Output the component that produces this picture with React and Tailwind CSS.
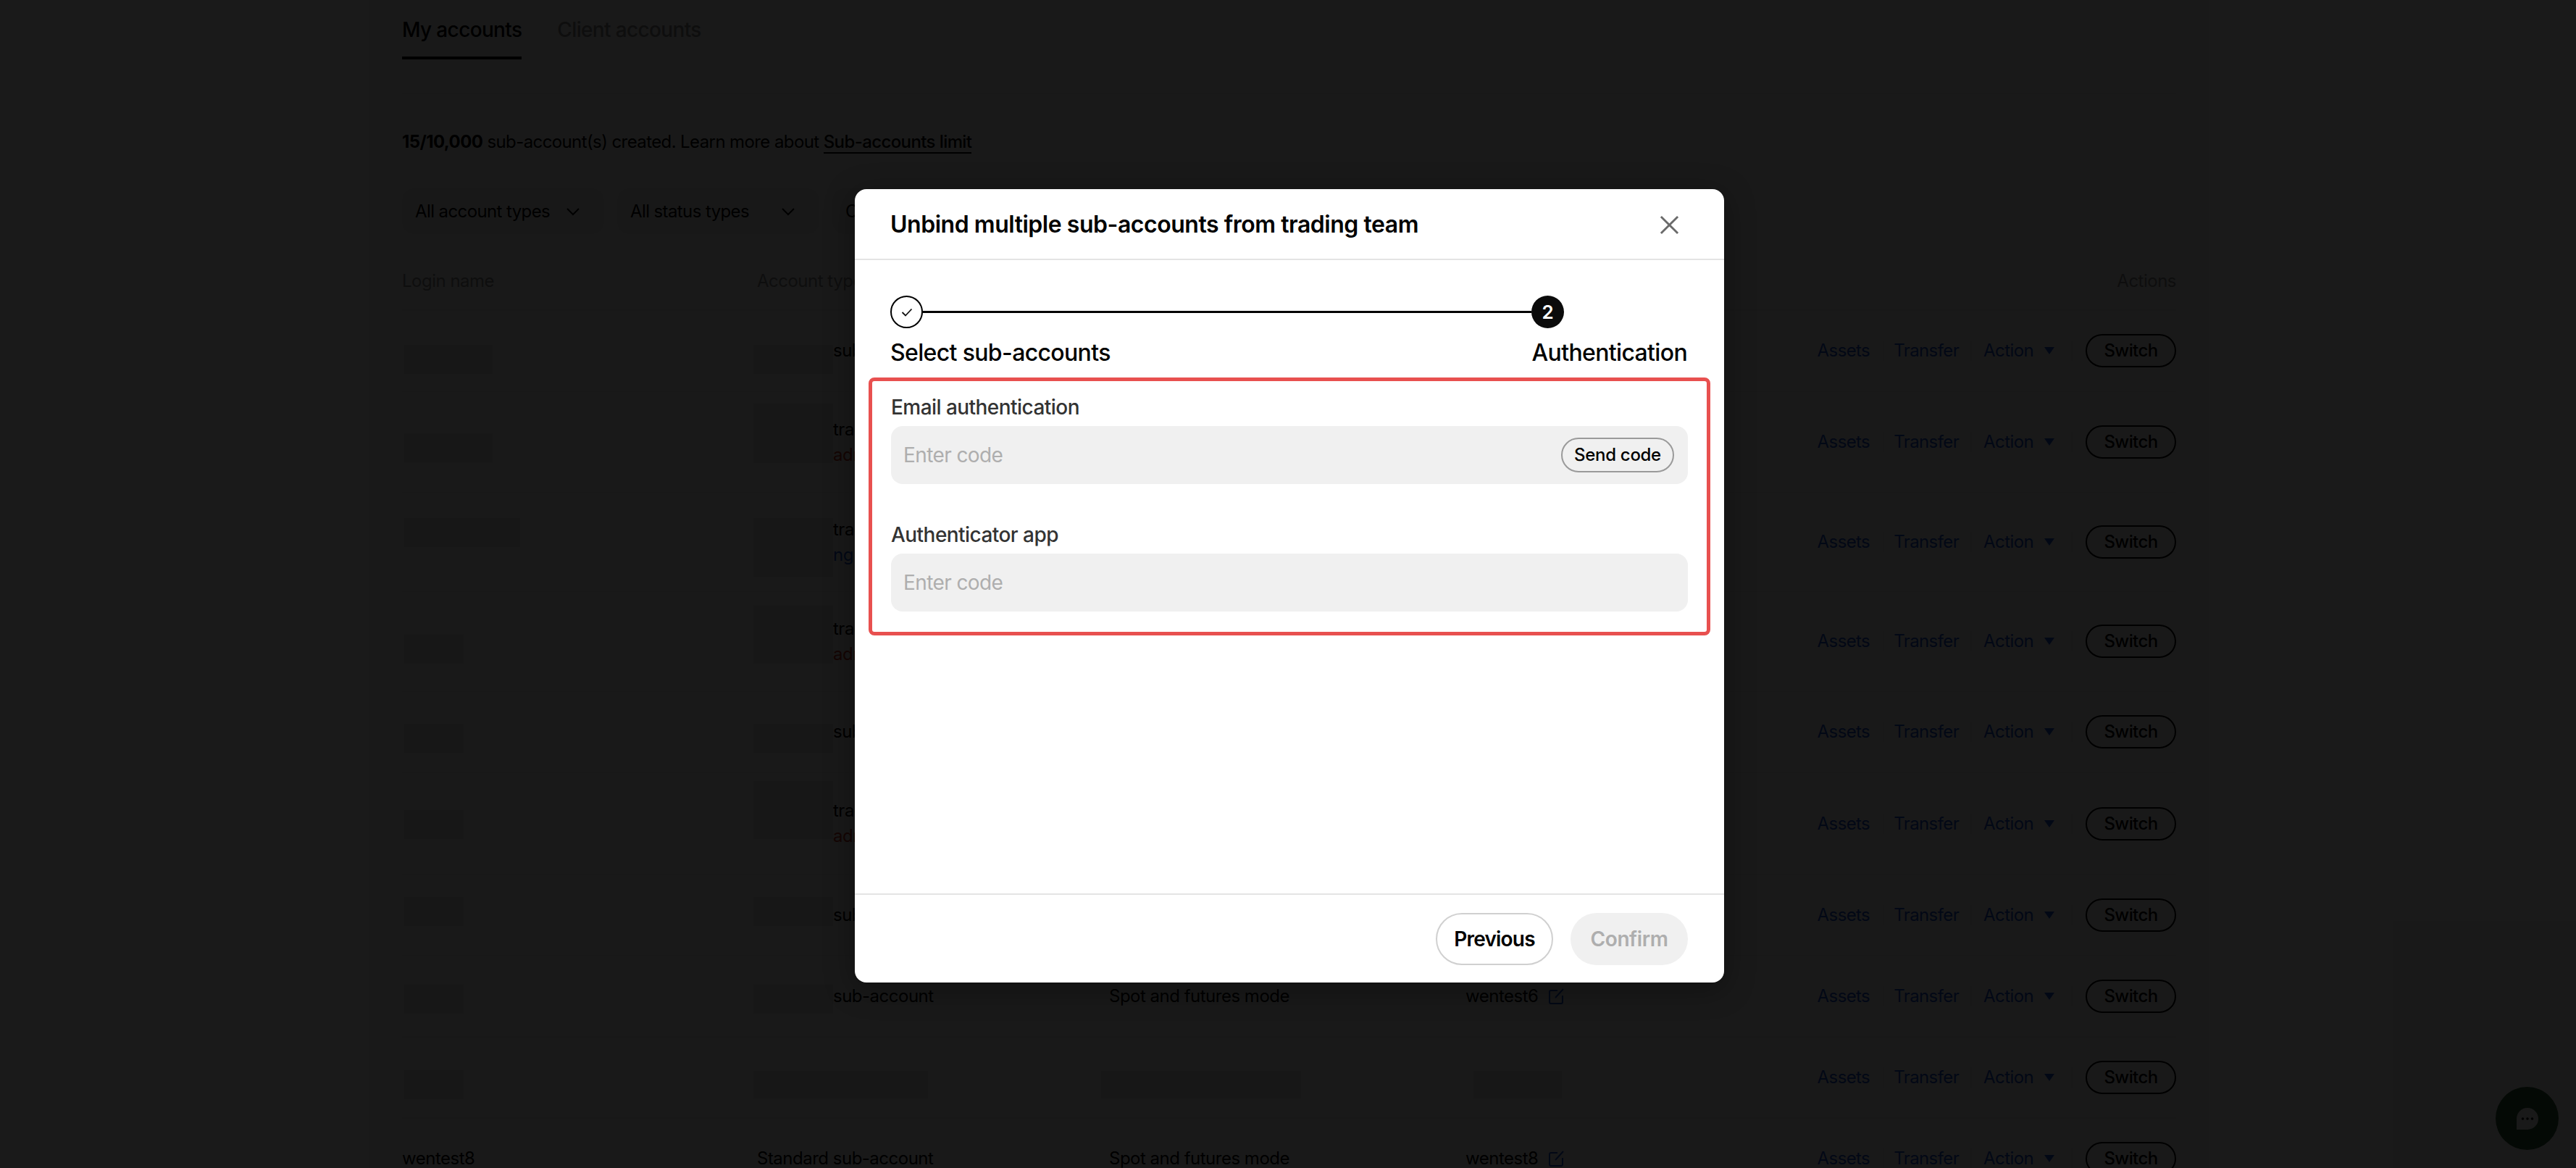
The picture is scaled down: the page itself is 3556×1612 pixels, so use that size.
import React from 'react';

const rows = [
  { h: 'h-[112px]', login: 'w-[122px]', shift: 'translate-y-[12px]', acct: 'h-[40px] translate-y-[12px]', kind: 'sub', name: 'wentest1' },
  { h: 'h-[140px]', login: 'w-[122px]', shift: 'translate-y-[8px]', acct: 'h-[82px] -translate-y-[12px]', kind: 'team', tone: 'text-[#c8321e]', second: 'admin', name: 'wentest2' },
  { h: 'h-[136px]', login: 'w-[160px]', shift: '-translate-y-[13px]', acct: 'h-[81px] translate-y-[7px]', kind: 'team', tone: 'text-[#1a4fd6]', second: 'ng', name: 'wentest3' },
  { h: 'h-[138px]', login: 'w-[82px]', shift: 'translate-y-[11px]', acct: 'h-[80px] -translate-y-[9px]', kind: 'team', tone: 'text-[#c8321e]', second: 'admin', name: 'wentest4' },
  { h: 'h-[112px]', login: 'w-[82px]', shift: 'translate-y-[9px]', acct: 'h-[40px] translate-y-[9px]', kind: 'sub', name: 'wentest5' },
  { h: 'h-[141px]', login: 'w-[82px]', shift: 'translate-y-[1px]', acct: 'h-[80px] -translate-y-[19px]', kind: 'team', tone: 'text-[#c8321e]', second: 'admin', name: 'wentest7' },
  { h: 'h-[112px]', login: 'w-[82px]', shift: '-translate-y-[5px]', acct: 'h-[40px] -translate-y-[5px]', kind: 'sub', name: 'wentest9' },
  { h: 'h-[112px]', login: 'w-[82px]', shift: 'translate-y-[4px]', acct: 'h-[40px] translate-y-[4px]', kind: 'sub', name: 'wentest6' },
  { h: 'h-[112px]', login: 'w-[82px]', shift: 'translate-y-[10px]', kind: 'masked', name: '' },
  { h: 'h-[112px]', kind: 'plain', name: 'wentest8' },
];

function Chevron() {
  return (
    <svg width="20" height="12" viewBox="0 0 20 12" fill="none" stroke="currentColor" strokeWidth="2">
      <path d="M2 2l8 8 8-8" />
    </svg>
  );
}

function EditIcon() {
  return (
    <svg width="21" height="22" viewBox="0 0 21 22" fill="none" stroke="#1a4fd6" strokeWidth="2">
      <path d="M12 3H3a2 2 0 0 0-2 2v14a2 2 0 0 0 2 2h14a2 2 0 0 0 2-2V10" />
      <path d="M9 13L20 1" />
    </svg>
  );
}

function Filter({ label }) {
  return (
    <div className="flex h-[63px] w-[279px] items-center justify-between rounded-2xl bg-[#f5f5f5] pl-[18px] pr-[33px] text-[24px] tracking-[-0.6px] whitespace-nowrap text-black">
      <span>{label}</span>
      <Chevron />
    </div>
  );
}

function AccountCell({ row }) {
  if (row.kind === 'plain') return <span>Standard sub-account</span>;
  if (row.kind === 'masked') {
    return <div className="-ml-[5px] h-[38px] w-[241px] translate-y-[10px] bg-[#eaeaea]" />;
  }
  return (
    <div className="-ml-[5px] flex items-center">
      <div className={`w-[110px] bg-[#eaeaea] ${row.acct}`} />
      {row.kind === 'sub' ? (
        <span>sub-account</span>
      ) : (
        <div className="flex flex-col gap-[9px]">
          <span>trading</span>
          <span className={row.tone}>{row.second}</span>
        </div>
      )}
    </div>
  );
}

function Row({ row }) {
  return (
    <div className={`grid ${row.h} grid-cols-[490px_486px_492px_1fr_auto] items-center border-b-2 border-[#f2f2f2] text-[24px] leading-[26px] tracking-[-0.5px] text-black`}>
      <div>
        {row.kind === 'plain' ? 'wentest8' : <div className={`ml-[3px] h-[40px] ${row.login} ${row.shift} bg-[#e8e8e8]`} />}
      </div>
      <AccountCell row={row} />
      <div>
        {row.kind === 'masked' ? <div className="-ml-[11px] h-[38px] w-[276px] translate-y-[10px] bg-[#eaeaea]" /> : 'Spot and futures mode'}
      </div>
      <div className="flex items-center gap-[15px]">
        {row.name ? (
          <>
            <span>{row.name}</span>
            <EditIcon />
          </>
        ) : (
          <div className="ml-[11px] h-[38px] w-[122px] translate-y-[10px] bg-[#eaeaea]" />
        )}
      </div>
      <div className="flex items-center tracking-[-0.6px] text-[#1a4fd6]">
        <span>Assets</span>
        <span className="ml-[18px] mr-[13px] h-[28px] w-[2px] bg-[#f2f2f2]" />
        <span>Transfer</span>
        <span className="mx-[16px] h-[28px] w-[2px] bg-[#f2f2f2]" />
        <span>Action</span>
        <svg className="ml-[14px]" width="16" height="10" viewBox="0 0 16 10" fill="currentColor">
          <path d="M1 0h14L8 10z" />
        </svg>
        <span className="ml-[22px] mr-[18px] h-[28px] w-[2px] bg-[#f2f2f2]" />
        <button className="h-[46px] w-[125px] rounded-full border-2 border-black text-center text-[24px] font-medium text-black">
          Switch
        </button>
      </div>
    </div>
  );
}

function CodeField({ label, action }) {
  return (
    <div>
      <div className="text-[28px] font-medium leading-[40px] tracking-[-0.55px] text-[#333333]">{label}</div>
      <div className="mt-[6px] flex h-[80px] items-center justify-between rounded-2xl bg-[#f0f0f0] pl-[17px] pr-[19px]">
        <span className="text-[28px] tracking-[-0.6px] text-[#aeaeae]">Enter code</span>
        {action}
      </div>
    </div>
  );
}

export default function App() {
  return (
    <div className="relative h-[1612px] w-[3556px] overflow-hidden bg-white font-['Inter',sans-serif]">
      {/* page under the dialog */}
      <div className="w-[3004px] pl-[555px]">
        <div className="flex h-[130px] gap-[49px] border-b-2 border-[#f2f2f2] text-[28px] font-medium tracking-[-0.65px]">
          <div className="h-[82px] border-b-4 border-black pt-[20px] text-black">My accounts</div>
          <div className="pt-[20px] text-[#8f8f8f]">Client accounts</div>
        </div>
        <div className="mt-[48px] text-[24px] leading-[36px] tracking-[-0.6px] text-black">
          <span className="font-bold">15/10,000</span> sub-account(s) created. Learn more about{' '}
          <span className="border-b-2 border-black font-medium">Sub-accounts limit</span>
        </div>
        <div className="mt-[46px] flex gap-[18px]">
          <Filter label="All account types" />
          <Filter label="All status types" />
          <Filter label="Created" />
        </div>
        <div className="mt-[33px] flex h-[73px] items-center justify-between border-b-2 border-[#f2f2f2] pb-[8px] text-[24px] tracking-[-0.5px] text-[#8f8f8f]">
          <div className="flex">
            <span className="w-[490px]">Login name</span>
            <span>Account type</span>
          </div>
          <span>Actions</span>
        </div>
        {rows.map((row, i) => (
          <Row key={i} row={row} />
        ))}
      </div>

      {/* chat button */}
      <div className="absolute left-[3445px] top-[1500px] flex h-[87px] w-[87px] items-center justify-center rounded-full bg-[#2f5a33]">
        <svg width="32" height="32" viewBox="0 0 32 32" fill="white">
          <path d="M16 1a15 15 0 1 1 0 30H1V16A15 15 0 0 1 16 1z" />
          <circle cx="9.500" cy="16" r="1.800" fill="#000000" />
          <circle cx="16" cy="16" r="1.800" fill="#000000" />
          <circle cx="22.500" cy="16" r="1.800" fill="#000000" />
        </svg>
      </div>

      {/* dim */}
      <div className="absolute inset-0 bg-black/90" />

      {/* dialog */}
      <div className="absolute left-[1180px] top-[261px] flex h-[1095px] w-[1200px] flex-col rounded-2xl bg-white shadow-[0_8px_40px_rgba(0,0,0,0.35)]">
        <div className="flex h-[98px] items-center justify-between border-b-2 border-[#e4e4e4] pl-[49px] pr-[62px]">
          <h2 className="translate-y-[1px] text-[32px] font-semibold tracking-[-0.47px] text-black">Unbind multiple sub-accounts from trading team</h2>
          <svg className="translate-y-[1px]" width="27" height="27" viewBox="0 0 28 28" fill="none" stroke="#6a6a6a" strokeWidth="3">
            <path d="M2 2l24 24M26 2L2 26" />
          </svg>
        </div>

        <div className="flex-1 px-[49px] pt-[49px]">
          <div className="flex items-center">
            <div className="flex h-[45px] w-[45px] shrink-0 items-center justify-center rounded-full border-2 border-black">
              <svg width="16" height="12" viewBox="0 0 16 12" fill="none" stroke="#111111" strokeWidth="1.800">
                <path d="M1.500 6l4.500 4.500L14.500 1.500" />
              </svg>
            </div>
            <div className="h-[3px] flex-1 bg-black" />
            <div className="flex h-[45px] w-[45px] shrink-0 items-center justify-center rounded-full bg-[#0b0b0b] text-[26px] font-semibold text-white">
              2
            </div>
            <div className="w-[172px] shrink-0" />
          </div>
          <div className="mt-[12px] flex justify-between pr-[2px] text-[32px] font-medium leading-[44px] tracking-[-0.65px] text-black">
            <span>Select sub-accounts</span>
            <span>Authentication</span>
          </div>

          <div className="-mx-[30px] mt-[12px] flex h-[356px] flex-col gap-[50px] rounded-lg border-[5px] border-[#e8504f] px-[26px] pt-[16px]">
            <CodeField
              label="Email authentication"
              action={
                <button className="h-[48px] w-[156px] rounded-full border-2 border-[#9a9a9a] text-[24px] font-medium tracking-[-0.3px] text-black">
                  Send code
                </button>
              }
            />
            <CodeField label="Authenticator app" />
          </div>
        </div>

        <div className="flex h-[123px] items-center justify-end gap-[24px] border-t-2 border-[#e4e4e4] pr-[50px]">
          <button className="h-[72px] w-[162px] rounded-full border-2 border-[#d0d0d0] text-[28px] font-semibold tracking-[-0.8px] text-black">
            Previous
          </button>
          <button className="h-[72px] w-[162px] rounded-full bg-[#f0f0f0] text-[28px] font-semibold tracking-[-0.4px] text-[#aeaeae]">
            Confirm
          </button>
        </div>
      </div>
    </div>
  );
}
